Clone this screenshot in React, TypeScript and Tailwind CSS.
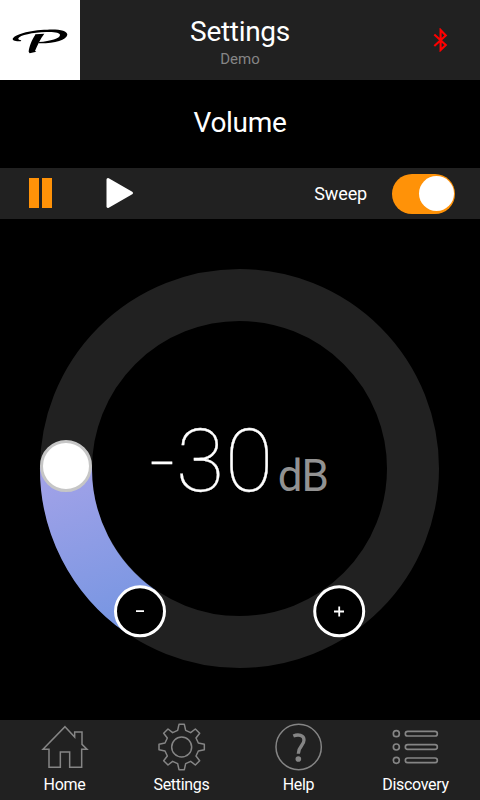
import React, { useState } from 'react';

const tabs = [
  { name: "Home", icon: <HomeIcon /> },
  { name: "Settings", icon: <GearIcon /> },
  { name: "Help", icon: <HelpIcon /> },
  { name: "Discovery", icon: <ListIcon /> }
];

function HomeIcon() {
  return (
    <svg className="w-[48px] h-[48px]" viewBox="2 0 144 144" fill="none" stroke="#858585" strokeWidth="4.5">
      <path d="M74 11L103 42V27H125V64L140 79H124V133H88V87H60V133H26V79H8Z" />
    </svg>
  );
}

function GearIcon() {
  return (
    <svg className="w-[48px] h-[48px]" viewBox="-71 -72 144 144" fill="none" stroke="#858585" strokeWidth="4.5" strokeLinejoin="round">
      <path d="M-8-68H8L12-50L27-43L41-54L54-41L43-27L50-12L68-8V8L50 12L43 27L54 41L41 54L27 43L12 50L8 68H-8L-12 50L-27 43L-41 54L-54 41L-43 27L-50 12L-68 8V-8L-50-12L-43-27L-54-41L-41-54L-27-43L-12-50Z" />
      <circle r="30" />
    </svg>
  );
}

function HelpIcon() {
  return (
    <svg className="w-[48px] h-[48px]" viewBox="-71 -72 144 144" fill="none" stroke="#858585">
      <circle r="68" strokeWidth="4.5" />
      <path d="M-16-33C-1-39 16-36 16-21C16-3-1-3-1 20" strokeWidth="10" />
      <circle cx="-1" cy="36" r="8.5" fill="#858585" stroke="none" />
    </svg>
  );
}

function ListIcon() {
  return (
    <svg className="w-[48px] h-[48px]" viewBox="2 0 144 144" fill="none" stroke="#858585" strokeWidth="5">
      {[32, 72, 112].map((y) => (
        <g key={y}>
          <circle cx="15" cy={y} r="9" />
          <rect x="42" y={y - 7} width="96" height="14" rx="7" />
        </g>
      ))}
    </svg>
  );
}

const Header = () => (
  <header className="flex h-20 bg-[#212121]">
    <div className="w-20 h-20 bg-white">
      <svg className="w-20 h-20" viewBox="0 0 240 240" fill="#000">
        <path d="M62 124C46 124 38 122 38 117C39 106 88 89 142 89C178 87 202 93 202 104C200 120 162 131 116 130L117 126C152 124 180 115 180 105C180 98 164 95 139 96C98 97 59 106 55 115C54 119 58 120 64 121Z" />
        <path d="M106 103L133 101C121 116 112 137 105 153L109 155L89 160L86 155C87 142 96 118 105 106Z" />
      </svg>
    </div>
    <div className="flex-1 text-center pt-3">
      <h1 className="text-[28px] leading-10 tracking-[-0.3px]">Settings</h1>
      <p className="text-[15px] leading-[15px] text-[#858585]">Demo</p>
    </div>
    <div className="w-20 flex items-center justify-center">
      <svg className="w-6 h-6" viewBox="0 0 24 24" fill="none" stroke="#f00" strokeWidth="2.1">
        <path d="M6.3 6.5L17.8 17L12.6 22V2L17.8 7.5L6.3 18" />
      </svg>
    </div>
  </header>
);

const Dial = () => (
  <main className="h-[501px] grid">
    <svg className="col-start-1 row-start-1 w-[480px] h-[501px]" viewBox="0 219 480 501" fill="none">
      <defs>
        <linearGradient id="level" gradientUnits="userSpaceOnUse" x1="66" y1="466" x2="120" y2="620">
          <stop offset="0" stopColor="#a2a2e8" />
          <stop offset="1" stopColor="#7896e2" />
        </linearGradient>
      </defs>
      <circle cx="239.5" cy="468.5" r="173.5" stroke="#212121" strokeWidth="52" />
      <path d="M66 466A173.5 173.5 0 0 0 140 611" stroke="url(#level)" strokeWidth="52" />
      <circle cx="66" cy="466" r="24.5" fill="#fff" stroke="#c6c6c6" strokeWidth="3" />
      <circle cx="140" cy="611.3" r="24.5" fill="#000" stroke="#fff" strokeWidth="3" />
      <circle cx="339.2" cy="611.3" r="24.5" fill="#000" stroke="#fff" strokeWidth="3" />
      <path d="M136 611.2H144M334 611.5H344M339.2 606.5V616.5" stroke="#fff" strokeWidth="1.8" />
    </svg>
    <div className="col-start-1 row-start-1 flex justify-center items-baseline pt-[190px]">
      <span className="text-[88px] leading-[104px] font-thin tracking-[0.7px] [-webkit-text-stroke:0.3px_white]">-30</span>
      <span className="text-[44px] ml-[4px] mr-[3px] tracking-[-1.2px] text-[#929292]">dB</span>
    </div>
  </main>
);

const App = () => {
  const [sweep, setSweep] = useState(true);

  return (
    <div className="w-[480px] h-[800px] bg-black text-white font-[Roboto,sans-serif] overflow-hidden">
      <Header />
      <h2 className="h-[88px] text-center text-[28px] leading-[86px] tracking-[-0.3px]">Volume</h2>
      <div className="h-[51px] bg-[#212121] flex items-center pl-[29px] pr-[25px]">
        <button className="flex gap-[3px] mb-px" aria-label="Pause">
          <span className="w-[10px] h-[30px] bg-[#ff9208]"></span>
          <span className="w-[10px] h-[30px] bg-[#ff9208]"></span>
        </button>
        <button className="ml-[54px] mb-px" aria-label="Play">
          <svg className="w-[28px] h-[32px]" viewBox="0 0 28 32" fill="#fff" stroke="#fff" strokeWidth="3" strokeLinejoin="round">
            <path d="M2 2.5L25.5 16L2 29.5Z" />
          </svg>
        </button>
        <span className="ml-auto mr-[25px] text-lg tracking-[-0.15px]">Sweep</span>
        <button
          className={`w-[63px] h-10 rounded-full flex items-center px-px ${sweep ? 'bg-[#ff9208] justify-end' : 'bg-gray-600'}`}
          aria-label="Toggle sweep"
          onClick={() => setSweep(!sweep)}
        >
          <span className="size-[35px] rounded-full bg-white"></span>
        </button>
      </div>
      <Dial />
      <nav className="h-20 bg-[#212121] flex px-[6px]">
        {tabs.map((tab) => (
          <button key={tab.name} className="w-[117px] flex flex-col items-center pt-[3px]">
            {tab.icon}
            <span className="text-base leading-7 tracking-[-0.3px]">{tab.name}</span>
          </button>
        ))}
      </nav>
    </div>
  );
};

export default App;
